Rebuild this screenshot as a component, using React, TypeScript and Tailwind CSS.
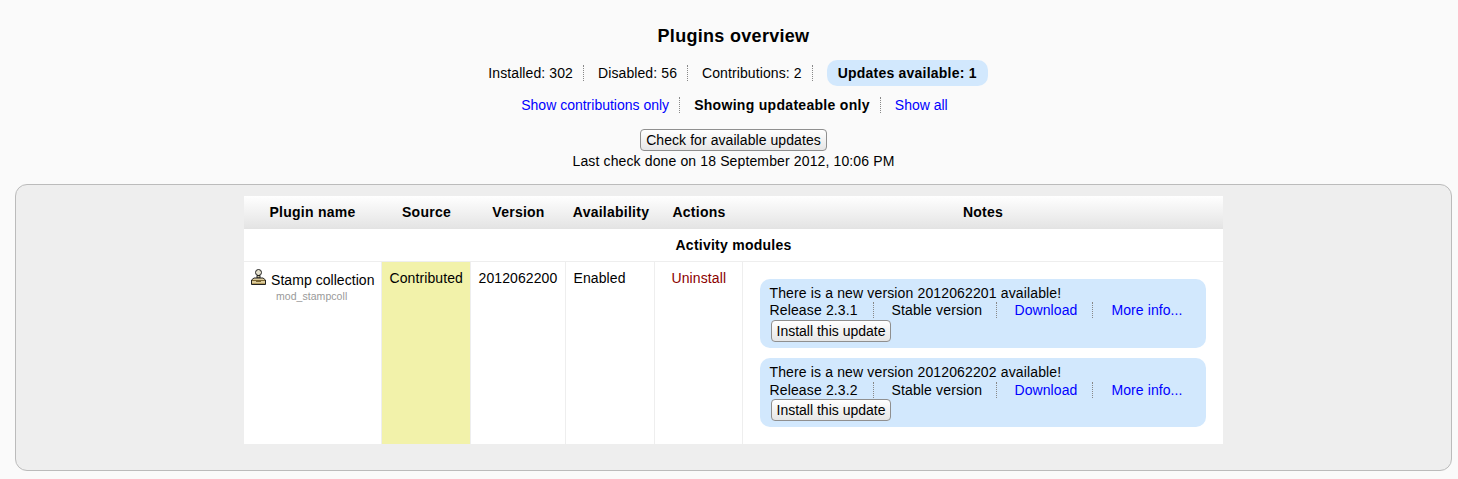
const font = "font-['Liberation_Sans',Arial,sans-serif]";

function Stamp() {
  return (
    <svg width="17" height="17" viewBox="0 0 17 17" className="absolute left-[6px] top-[7px]">
      <circle cx="8.500" cy="3.500" r="3" fill="#e4e0cc" stroke="#222" />
      <path d="M7 6.500h3v2.500H7z" fill="#cfc39c" stroke="#222" />
      <path d="M1.500 15.500v-4.500l2.500-2h9l2.500 2v4.500z" fill="#dccb9b" stroke="#222" strokeLinejoin="round" />
      <path d="M2 11.500h13M6 12.500h5" stroke="#7a6531" />
      <path d="M2 14.500h13" stroke="#b39b5e" />
    </svg>
  );
}

function Btn({ children, className = "" }: { children: React.ReactNode; className?: string }) {
  return (
    <button className={`inline-block h-[22px] rounded-[4px] border border-[#8f8f8f] bg-gradient-to-b from-white to-[#e6e6e6] px-[5px] text-[14px] leading-[20px] text-black ${className}`}>
      {children}
    </button>
  );
}

function Dot({ className = "" }: { className?: string }) {
  return <span className={`inline-block h-[16px] border-l border-dotted border-[#888] ${className}`} />;
}

function Update({ version, release, line2 }: { version: string; release: string; line2: string }) {
  return (
    <div className="mb-[10px] h-[69px] w-[446px] rounded-[10px] bg-[#d2e8fd] pl-[10px] pt-[6px] text-[14px] leading-[16px] tracking-[0.14px] text-black">
      <div className="h-[17px]">There is a new version {version} available!</div>
      <div className={`flex items-start ${line2}`}>
        <span className="w-[103px]">Release {release}</span>
        <Dot />
        <span className="ml-[18px] w-[104px]">Stable version</span>
        <Dot />
        <a className="ml-[18px] w-[77px] tracking-[0.08px] text-[#0000ff]">Download</a>
        <Dot />
        <a className="ml-[19px] tracking-[0.08px] text-[#0000ff]">More info...</a>
      </div>
      <Btn className="ml-[1px] block tracking-normal">Install this update</Btn>
    </div>
  );
}

export default function App() {
  const th = "h-[32px] border-b border-[#e3e3e3] bg-gradient-to-b from-white to-[#e4e4e4] p-0 pt-[1px] text-center align-middle text-[14px] font-bold tracking-[0.25px]";
  const td = "border-l border-[#eeeeee] px-[8px] pt-[8px] align-top text-[14px] leading-[16px] tracking-[0.1px]";
  return (
    <div className={`${font} h-[479px] w-[1458px] overflow-hidden bg-[#fafafa] pl-[15px] pr-[6px] text-black`}>
      <h2 className="pt-[26px] text-center text-[18px] font-bold leading-[20px] tracking-[0.3px]">Plugins overview</h2>

      <div className="mt-[14px] flex h-[26px] items-center justify-center pl-[9px] text-[14px] tracking-[0.1px]">
        <span>Installed: 302</span>
        <Dot className="ml-[10px]" />
        <span className="ml-[14px]">Disabled: 56</span>
        <Dot className="ml-[10px]" />
        <span className="ml-[14px]">Contributions: 2</span>
        <Dot className="ml-[10px]" />
        <span className="ml-[14px] flex h-[26px] items-center rounded-[10px] bg-[#d2e8fd] px-[11px] font-bold tracking-[0.22px]">Updates available: 1</span>
      </div>

      <div className="mt-[11px] flex h-[16px] items-center justify-center pl-[2px] text-[14px]">
        <a className="text-[#0000ff]">Show contributions only</a>
        <Dot className="ml-[10px]" />
        <b className="ml-[14px] tracking-[0.3px]">Showing updateable only</b>
        <Dot className="ml-[10px]" />
        <a className="ml-[14px] text-[#0000ff]">Show all</a>
      </div>

      <div className="mt-[16px] flex justify-center"><Btn className="tracking-[0.07px]">Check for available updates</Btn></div>
      <div className="mt-[2px] text-center text-[14px] leading-[16px] tracking-[0.13px]">Last check done on 18 September 2012, 10:06 PM</div>

      <div className="mt-[15px] h-[287px] w-[1437px] rounded-[12px] border border-[#bbbbbb] bg-[#eeeeee] pt-[11px]">
        <table className="mx-auto w-[979px] table-fixed border-collapse bg-white">
          <colgroup>
            <col className="w-[137px]" /><col className="w-[89px]" /><col className="w-[95px]" /><col className="w-[89px]" /><col className="w-[88px]" /><col />
          </colgroup>
          <thead>
            <tr>
              <th className={th}>Plugin name</th>
              <th className={`${th} pl-[2px]`}>Source</th>
              <th className={`${th} pl-[2px]`}>Version</th>
              <th className={`${th} pl-[3px] tracking-[0.2px]`}>Availability</th>
              <th className={`${th} pl-[2px]`}>Actions</th>
              <th className={`${th} pl-[1px]`}>Notes</th>
            </tr>
          </thead>
          <tbody>
            <tr>
              <td colSpan={6} className="h-[33px] border-b border-[#eeeeee] p-0 pt-[2px] text-center align-middle text-[14px] font-bold tracking-[0.25px]">Activity modules</td>
            </tr>
            <tr className="h-[183px]">
              <td className="relative px-0 pt-[10px] align-top tracking-[0.05px]">
                <Stamp />
                <div className="pl-[27px] text-[14px] leading-[16px]">Stamp collection</div>
                <div className="mt-[2px] pl-[32px] text-[10.5px] leading-[12px] text-[#999999]">mod_stampcoll</div>
              </td>
              <td className={`${td} bg-[#f2f2aa]`}>Contributed</td>
              <td className={td}>2012062200</td>
              <td className={td}>Enabled</td>
              <td className={`${td} pl-[17px] tracking-[-0.15px] text-[#8b0000]`}>Uninstall</td>
              <td className="border-l border-[#eeeeee] pl-[17px] pt-[17px] align-top">
                <Update version="2012062201" release="2.3.1" line2="h-[18px]" />
                <Update version="2012062202" release="2.3.2" line2="h-[18px] pt-[1px]" />
              </td>
            </tr>
          </tbody>
        </table>
      </div>
    </div>
  );
}
